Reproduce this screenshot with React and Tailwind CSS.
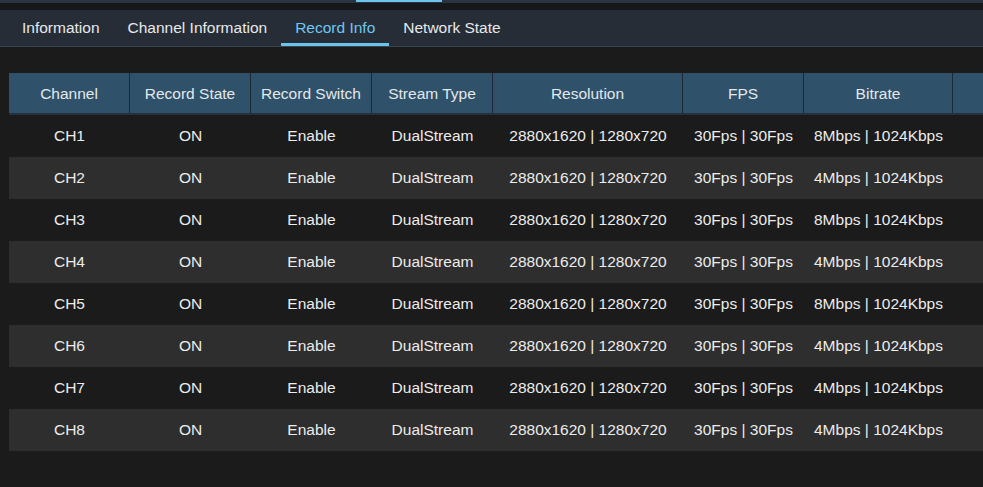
import React from "react";

const TABS = ["Information", "Channel Information", "Record Info", "Network State"];
const COLUMNS = ["Channel", "Record State", "Record Switch", "Stream Type", "Resolution", "FPS", "Bitrate", ""];

const ROWS = [1, 2, 3, 4, 5, 6, 7, 8].map((n) => ({
  ch: `CH${n}`,
  bitrate: [1, 3, 5].includes(n) ? "8Mbps | 1024Kbps" : "4Mbps | 1024Kbps",
}));

const GRID = "grid grid-cols-[121px_121px_121px_121px_190px_121px_149px_1fr]";

export default function App() {
  return (
    <div className="h-[487px] w-[983px] overflow-hidden bg-[#1b1b1b] font-['Liberation_Sans',Arial,sans-serif] text-[15.5px]">
      <div className="flex h-[3px] bg-[#2a3441]">
        <div className="w-[356px]" />
        <div className="h-[2px] w-[86px] bg-[#6ec6ec]" />
      </div>
      <div className="h-[7px] bg-[#16181b]" />

      <div className="flex h-[37px] border-b border-[#3a4450] bg-[#262d36] pl-[8px]">
        {TABS.map((tab) => {
          const active = tab === "Record Info";
          return (
            <div
              key={tab}
              className={
                active
                  ? "flex items-center border-b-[3px] border-[#6ec3ea] px-[14px] pt-[3px] text-[#6ec6f5]"
                  : "flex items-center px-[14px] text-[#e6e9ec]"
              }
            >
              {tab}
            </div>
          );
        })}
      </div>

      <div className="ml-[9px] mt-[26px]">
        <div className={`${GRID} h-[42px] border-b-2 border-[#24323d] bg-[#2f5169] text-[#e2e8ec]`}>
          {COLUMNS.map((col, i) => (
            <div
              key={i}
              className={
                i < COLUMNS.length - 1
                  ? "flex items-center justify-center border-r border-[#1c2833] pt-[1px]"
                  : "flex items-center justify-center"
              }
            >
              {col}
            </div>
          ))}
        </div>

        {ROWS.map((row, i) => (
          <div
            key={row.ch}
            className={`${GRID} h-[42px] pb-[1px] text-[#ececec] ${i % 2 === 1 ? "bg-[#2e2e2e]" : ""}`}
          >
            <div className="flex items-center justify-center">{row.ch}</div>
            <div className="flex items-center justify-center">ON</div>
            <div className="flex items-center justify-center">Enable</div>
            <div className="flex items-center justify-center">DualStream</div>
            <div className="flex items-center justify-center">2880x1620 | 1280x720</div>
            <div className="flex items-center justify-center">30Fps | 30Fps</div>
            <div className="flex items-center justify-center">{row.bitrate}</div>
            <div />
          </div>
        ))}
      </div>
    </div>
  );
}
